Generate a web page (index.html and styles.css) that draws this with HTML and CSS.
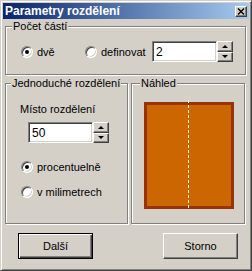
FILE: index.html
```html
<!DOCTYPE html>
<html lang="cs">
<head>
    <meta charset="UTF-8">
    <title>Parametry rozdělení</title>
    <link rel="stylesheet" href="styles.css">
</head>
<body>
    <div class="window">
        <div class="titlebar">
            <span class="title">Parametry rozdělení</span>
            <span class="close">
                <svg width="8" height="7" viewBox="0 0 8 7"><path d="M1 0.5 L7 6.5 M7 0.5 L1 6.5" stroke="#000" stroke-width="1.4" fill="none"/></svg>
            </span>
        </div>
        <div class="content">
            <fieldset class="group count">
                <legend>Počet částí</legend>
                <div class="row">
                    <label class="radio first"><span class="dot on"></span>dvě</label>
                    <label class="radio second"><span class="dot"></span>definovat</label>
                    <div class="spin">
                        <div class="field">2</div>
                        <div class="arrows"><span class="up"><i></i></span><span class="down"><i></i></span></div>
                    </div>
                </div>
            </fieldset>

            <div class="split">
                <fieldset class="group simple">
                    <legend>Jednoduché rozdělení</legend>
                    <div class="inner">
                        <div class="caption">Místo rozdělení</div>
                        <div class="spin place">
                            <div class="field">50</div>
                            <div class="arrows"><span class="up"><i></i></span><span class="down"><i></i></span></div>
                        </div>
                        <label class="radio opt"><span class="dot on"></span>procentuelně</label>
                        <label class="radio opt"><span class="dot"></span>v milimetrech</label>
                    </div>
                </fieldset>
                <fieldset class="group preview">
                    <legend>Náhled</legend>
                    <div class="inner">
                        <svg width="90" height="110" viewBox="0 0 90 110">
                            <rect x="1.5" y="3.5" width="87" height="104" fill="#cc6600" stroke="#993300" stroke-width="3"/>
                            <line x1="44.5" y1="0" x2="44.5" y2="109" stroke="#fff4c8" stroke-width="1" stroke-dasharray="3 2"/>
                        </svg>
                    </div>
                </fieldset>
            </div>

            <div class="buttons">
                <button class="btn default">Další</button>
                <button class="btn">Storno</button>
            </div>
        </div>
    </div>
</body>
</html>
```

FILE: styles.css
```css
*{
    box-sizing: border-box;
}
body{
    margin: 0;
    background-color: #d4d0c8;
    font-family: "Liberation Sans", Arial, sans-serif;
    font-size: 11px;
    color: black;
}
.window{
    width: 252px;
    height: 271px;
    border: 1px solid;
    border-color: #d4d0c8 #404040 #404040 #d4d0c8;
    box-shadow: inset 1px 1px #fff, inset -1px -1px #808080;
    padding: 2px;
    background-color: #d4d0c8;
}
.titlebar{
    height: 16px;
    display: flex;
    align-items: center;
    padding: 0 2px 0 2px;
    background: linear-gradient(to right, #0a246a, #a6caf0);
}
.title{
    color: white;
    font-weight: bold;
    font-size: 12px;
}
.close{
    margin-left: auto;
    width: 12px;
    height: 11px;
    background-color: #d4d0c8;
    border: 1px solid;
    border-color: #fff #404040 #404040 #fff;
    box-shadow: inset -1px -1px #808080;
    display: flex;
    align-items: center;
    justify-content: center;
}
.content{
    padding: 0 3px 0 2px;
}
.group{
    margin: 0;
    padding: 0;
    min-width: 0;
    border: 1px solid #808080;
    box-shadow: inset 1px 1px #fff, 1px 1px #fff;
}
legend{
    padding: 0 1px;
    line-height: 13px;
    background-color: #d4d0c8;
}
.count{
    margin-top: 1px;
}
.count legend{
    margin-left: 6px;
}
.row{
    height: 41px;
    padding: 8px 0 0 15px;
    display: flex;
    align-items: flex-start;
}
.radio{
    height: 21px;
    display: flex;
    align-items: center;
}
.radio.first{
    width: 64px;
}
.radio.second{
    width: 67px;
}
.dot{
    width: 12px;
    height: 12px;
    margin-right: 4px;
    border-radius: 50%;
    background-color: white;
    border: 1px solid;
    border-color: #808080 #fff #fff #808080;
    box-shadow: inset 1px 1px #404040, inset -1px -1px #d4d0c8;
    display: flex;
    align-items: center;
    justify-content: center;
}
.dot.on::after{
    content: "";
    width: 4px;
    height: 4px;
    border-radius: 50%;
    background-color: black;
}
.spin{
    display: flex;
}
.field{
    width: 65px;
    height: 21px;
    padding: 3px 0 0 3px;
    background-color: white;
    border: 1px solid;
    border-color: #808080 #fff #fff #808080;
    box-shadow: inset 1px 1px #404040, inset -1px -1px #d4d0c8;
    font-size: 12px;
}
.arrows{
    width: 16px;
    height: 21px;
    display: flex;
    flex-direction: column;
}
.arrows span{
    flex: 1;
    border: 1px solid;
    border-color: #fff #404040 #404040 #fff;
    box-shadow: inset -1px -1px #808080;
    display: flex;
    align-items: center;
    justify-content: center;
}
.arrows i{
    width: 0;
    height: 0;
    border-left: 3px solid transparent;
    border-right: 3px solid transparent;
}
.up i{
    border-bottom: 3px solid black;
}
.down i{
    border-top: 3px solid black;
}
.split{
    display: flex;
    gap: 3px;
    margin-top: 2px;
}
.simple{
    width: 123px;
}
.simple legend{
    margin-left: 5px;
}
.preview{
    width: 114px;
}
.preview legend{
    margin-left: 8px;
}
.simple .inner{
    height: 133px;
    padding: 13px 0 0 14px;
}
.caption{
    line-height: 13px;
}
.place{
    margin: 6px 0 0 8px;
}
.opt{
    height: 16px;
    margin-left: 1px;
}
.place + .opt{
    margin-top: 16px;
}
.opt + .opt{
    margin-top: 9px;
}
.preview .inner{
    height: 133px;
    padding: 10px 0 0 12px;
}
.preview svg{
    display: block;
}
.buttons{
    display: flex;
    justify-content: space-between;
    padding: 0 8px 0 13px;
    margin-top: 9px;
}
.btn{
    width: 75px;
    height: 26px;
    padding: 0;
    font-family: "Liberation Sans", Arial, sans-serif;
    font-size: 11px;
    color: black;
    background-color: #d4d0c8;
    border: 1px solid;
    border-color: #fff #404040 #404040 #fff;
    box-shadow: inset -1px -1px #808080;
}
.btn.default{
    border-color: black;
    box-shadow: inset 1px 1px #fff, inset -1px -1px #404040, inset -2px -2px #808080;
}
```
